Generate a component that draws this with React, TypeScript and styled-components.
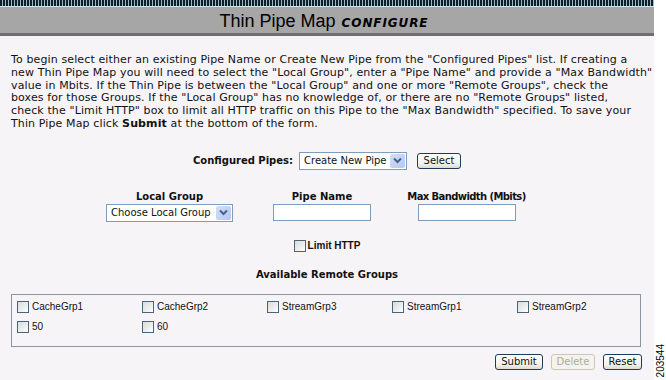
import React from 'react';
import styled, { createGlobalStyle } from 'styled-components';

const GlobalStyle = createGlobalStyle`
  html, body {
    margin: 0;
    padding: 0;
    background: #ffffff;
  }
`;

const Shell = styled.div`
  display: flex;
  width: 666px;
  height: 380px;
  overflow: hidden;
`;

const Main = styled.div`
  width: 654px;
  height: 380px;
  display: flex;
  flex-direction: column;
  background: #f7f4f7;
  font-family: 'DejaVu Sans', Verdana, sans-serif;
  font-size: 10px;
  color: #000;
`;

const Side = styled.div`
  flex: 1;
  display: flex;
  align-items: flex-end;
  justify-content: center;
  padding-bottom: 3px;
  background: #ffffff;
`;

const FigureNo = styled.span`
  writing-mode: vertical-rl;
  transform: rotate(180deg);
  font-family: 'Liberation Sans', Arial, sans-serif;
  font-size: 10px;
  color: #000;
`;

const Stripe = styled.div`
  height: 6px;
  background: repeating-linear-gradient(90deg, #0d1f2a 0 2px, #9fb9c2 2px 3px);
  border-bottom: 1px solid #cfeaee;
`;

const TitleBar = styled.div`
  height: 26px;
  display: flex;
  align-items: center;
  justify-content: center;
  gap: 6px;
  padding-right: 6px;
  background: #a6a6a6;
  border-bottom: 3px solid #6f6f6f;
`;

const Title = styled.span`
  font-family: 'Liberation Sans', Tahoma, sans-serif;
  font-size: 18px;
  color: #000;
  padding-top: 2px;
`;

const Tag = styled.span`
  font-family: 'DejaVu Sans', Verdana, sans-serif;
  font-size: 12px;
  letter-spacing: 0.9px;
  font-weight: bold;
  font-style: italic;
  padding-top: 5px;
`;

const Intro = styled.p`
  margin: 18px 11px 0 11px;
  font-size: 11px;
  letter-spacing: 0.12px;
  line-height: 12.8px;
  white-space: nowrap;
  color: #111;
`;

const CenterRow = styled.div<{ $top: number }>`
  display: flex;
  align-items: center;
  justify-content: center;
  gap: 6px;
  margin-top: ${(p) => p.$top}px;
`;

const Label = styled.span`
  font-weight: bold;
  color: #111;
`;

const SelectBox = styled.div<{ $w: number }>`
  box-sizing: border-box;
  width: ${(p) => p.$w}px;
  height: 18px;
  display: flex;
  align-items: center;
  justify-content: space-between;
  padding-left: 4px;
  padding-right: 1px;
  background: #ffffff;
  border: 1px solid #7f9db9;
  color: #111;
`;

const ArrowBtn = styled.span`
  width: 15px;
  height: 14px;
  display: flex;
  align-items: center;
  justify-content: center;
  background: linear-gradient(135deg, #d2ddf8, #b4c8f4);
  border-radius: 2px;
`;

const Button = styled.button<{ $w: number; $disabled?: boolean }>`
  box-sizing: border-box;
  width: ${(p) => p.$w}px;
  height: 16px;
  padding: 0;
  font-family: 'DejaVu Sans', Verdana, sans-serif;
  font-size: 10px;
  line-height: 14px;
  color: ${(p) => (p.$disabled ? '#b0ab9c' : '#111')};
  background: ${(p) =>
    p.$disabled ? '#f4f3ee' : 'linear-gradient(180deg, #ffffff 0%, #f1f0ea 70%, #dcdad0 100%)'};
  border: 1px solid ${(p) => (p.$disabled ? '#cbc7b8' : '#1f3b57')};
  border-radius: 3px;
`;

const FieldRow = styled.div`
  display: flex;
  align-items: flex-start;
  margin-top: 21px;
  padding-left: 106px;
`;

const FieldCol = styled.div<{ $w: number; $gap: number }>`
  width: ${(p) => p.$w}px;
  margin-right: ${(p) => p.$gap}px;
  display: flex;
  flex-direction: column;
  align-items: center;
  gap: 1px;
`;

const ColLabel = styled.span<{ $tight?: boolean }>`
  font-weight: bold;
  line-height: 12px;
  white-space: nowrap;
  letter-spacing: ${(p) => (p.$tight ? '-0.6px' : '0')};
  color: #111;
`;

const TextInput = styled.div`
  box-sizing: border-box;
  width: 98px;
  height: 17px;
  background: #ffffff;
  border: 1px solid #7f9db9;
`;

const Check = styled.span`
  box-sizing: border-box;
  width: 12px;
  height: 12px;
  flex: none;
  border: 1px solid #4b6478;
  background: linear-gradient(135deg, #d9dcdc 0%, #eef0f0 60%, #ffffff 100%);
`;

const Heading = styled.div`
  margin-top: 17px;
  text-align: center;
  font-weight: bold;
  line-height: 12px;
  color: #111;
`;

const GroupBox = styled.div`
  box-sizing: border-box;
  height: 53px;
  margin: 13px 13px 0 11px;
  padding: 6px 0 0 5px;
  border: 1px solid #8797a2;
  display: grid;
  grid-template-columns: repeat(5, 125px);
  grid-auto-rows: 20px;
`;

const GroupItem = styled.label`
  display: flex;
  align-items: flex-start;
  gap: 3px;
  font-family: 'Liberation Sans', Arial, sans-serif;
  font-size: 10px;
  line-height: 11px;
  color: #111;
`;

const ButtonBar = styled.div`
  display: flex;
  justify-content: flex-end;
  gap: 8px;
  margin: 7px 12px 0 0;
`;

const Chevron = () => (
  <svg width="9" height="7" viewBox="0 0 9 7">
    <path d="M1 1.5 L4.5 5 L8 1.5" fill="none" stroke="#4d6185" strokeWidth="2" />
  </svg>
);

const groups = ['CacheGrp1', 'CacheGrp2', 'StreamGrp3', 'StreamGrp1', 'StreamGrp2', '50', '60'];

export default function App() {
  return (
    <>
      <GlobalStyle />
      <Shell>
        <Main>
          <Stripe />
          <TitleBar>
            <Title>Thin Pipe Map</Title>
            <Tag>CONFIGURE</Tag>
          </TitleBar>
          <Intro>
            To begin select either an existing Pipe Name or Create New Pipe from the "Configured Pipes" list. If creating a
            <br />
            new Thin Pipe Map you will need to select the "Local Group", enter a "Pipe Name" and provide a "Max Bandwidth"
            <br />
            value in Mbits. If the Thin Pipe is between the "Local Group" and one or more "Remote Groups", check the
            <br />
            boxes for those Groups. If the "Local Group" has no knowledge of, or there are no "Remote Groups" listed,
            <br />
            check the "Limit HTTP" box to limit all HTTP traffic on this Pipe to the "Max Bandwidth" specified. To save your
            <br />
            Thin Pipe Map click <b>Submit</b> at the bottom of the form.
          </Intro>
          <CenterRow $top={21}>
            <Label>Configured Pipes:</Label>
            <SelectBox $w={108}>
              Create New Pipe
              <ArrowBtn>
                <Chevron />
              </ArrowBtn>
            </SelectBox>
            <Button $w={44} style={{ marginLeft: 4 }}>
              Select
            </Button>
          </CenterRow>
          <FieldRow>
            <FieldCol $w={127} $gap={40}>
              <ColLabel>Local Group</ColLabel>
              <SelectBox $w={127}>
                Choose Local Group
                <ArrowBtn>
                  <Chevron />
                </ArrowBtn>
              </SelectBox>
            </FieldCol>
            <FieldCol $w={98} $gap={37}>
              <ColLabel>Pipe Name</ColLabel>
              <TextInput />
            </FieldCol>
            <FieldCol $w={117} $gap={0}>
              <ColLabel $tight>Max Bandwidth (Mbits)</ColLabel>
              <TextInput />
            </FieldCol>
          </FieldRow>
          <CenterRow $top={18}>
            <GroupItem as="span" style={{ gap: 2 }}>
              <Check />
              <Label>Limit HTTP</Label>
            </GroupItem>
          </CenterRow>
          <Heading>Available Remote Groups</Heading>
          <GroupBox>
            {groups.map((g) => (
              <GroupItem key={g}>
                <Check />
                {g}
              </GroupItem>
            ))}
          </GroupBox>
          <ButtonBar>
            <Button $w={48}>Submit</Button>
            <Button $w={44} $disabled>
              Delete
            </Button>
            <Button $w={39}>Reset</Button>
          </ButtonBar>
        </Main>
        <Side>
          <FigureNo>203544</FigureNo>
        </Side>
      </Shell>
    </>
  );
}
